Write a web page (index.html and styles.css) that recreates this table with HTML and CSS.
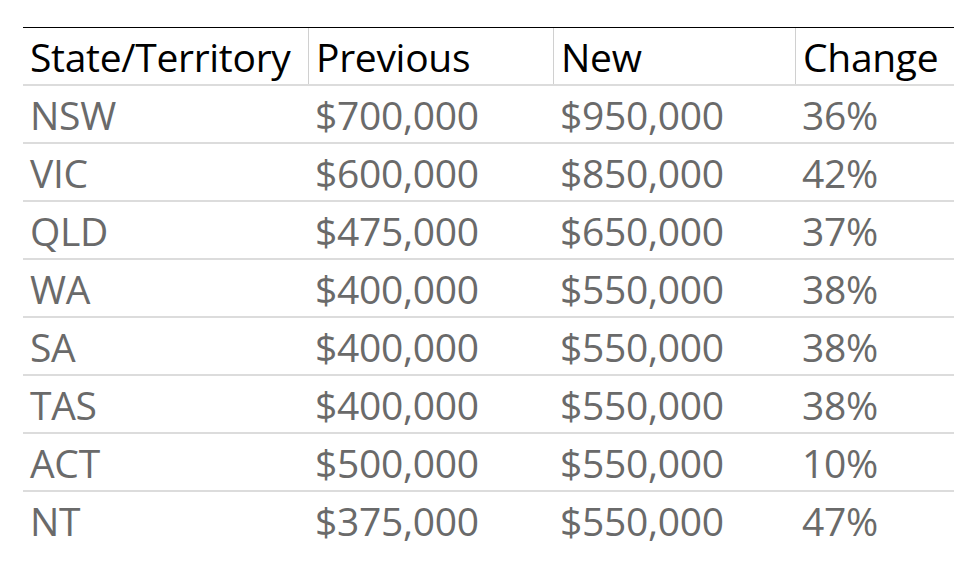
FILE: index.html
```html
<!DOCTYPE html>
<html>
<head>
<meta charset="utf-8">
<link rel="stylesheet" href="styles.css">
</head>
<body>
<div class="table">
  <div class="row head">
    <div class="cell">State/Territory</div>
    <div class="cell sep">Previous</div>
    <div class="cell sep">New</div>
    <div class="cell sep">Change</div>
  </div>
  <div class="row"><div class="cell">NSW</div><div class="cell">$700,000</div><div class="cell">$950,000</div><div class="cell">36%</div></div>
  <div class="row"><div class="cell">VIC</div><div class="cell">$600,000</div><div class="cell">$850,000</div><div class="cell">42%</div></div>
  <div class="row"><div class="cell">QLD</div><div class="cell">$475,000</div><div class="cell">$650,000</div><div class="cell">37%</div></div>
  <div class="row"><div class="cell">WA</div><div class="cell">$400,000</div><div class="cell">$550,000</div><div class="cell">38%</div></div>
  <div class="row"><div class="cell">SA</div><div class="cell">$400,000</div><div class="cell">$550,000</div><div class="cell">38%</div></div>
  <div class="row"><div class="cell">TAS</div><div class="cell">$400,000</div><div class="cell">$550,000</div><div class="cell">38%</div></div>
  <div class="row"><div class="cell">ACT</div><div class="cell">$500,000</div><div class="cell">$550,000</div><div class="cell">10%</div></div>
  <div class="row last"><div class="cell">NT</div><div class="cell">$375,000</div><div class="cell">$550,000</div><div class="cell">47%</div></div>
</div>
</body>
</html>
```
FILE: styles.css
```css
html, body {
  margin: 0;
  padding: 0;
  background: #ffffff;
}
body {
  font-family: "Open Sans", "Noto Sans", sans-serif;
}
.table {
  margin: 27px 0 0 23px;
  width: 931px;
  border-top: 1px solid #000000;
}
.row {
  display: grid;
  grid-template-columns: 285px 245px 242px 159px;
  border-bottom: 2px solid #dcdcdc;
}
.row.last {
  border-bottom: none;
}
.cell {
  height: 56px;
  line-height: 58px;
  font-size: 39px;
  letter-spacing: -0.3px;
  padding-left: 7px;
  color: #6a6a6a;
  white-space: nowrap;
  overflow: visible;
}
.head .cell {
  color: #000000;
}
.head .sep {
  border-left: 1px solid #d0d0d0;
}
```
